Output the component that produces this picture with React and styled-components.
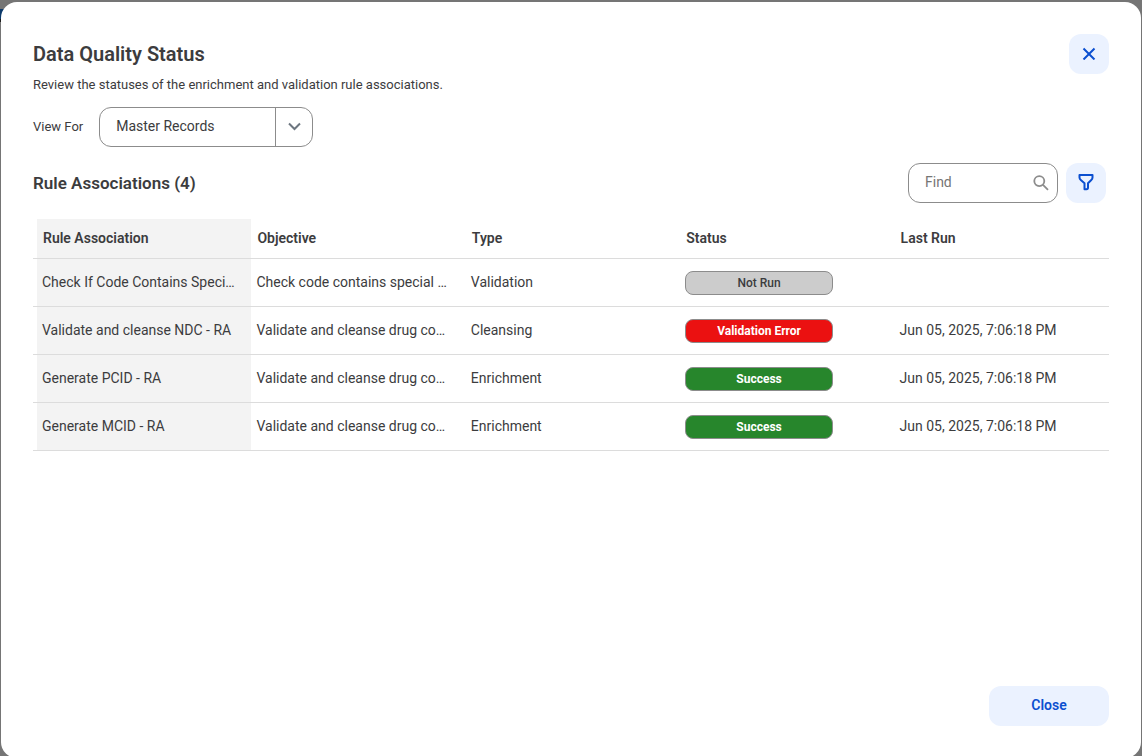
import styled, { createGlobalStyle } from "styled-components";
import { useState } from "react";

const GlobalStyle = createGlobalStyle`
  * {
    box-sizing: border-box;
  }
  body {
    margin: 0;
    font-family: Roboto, "Liberation Sans", sans-serif;
    color: #3c3c3e;
  }
  button, input, select {
    font-family: inherit;
  }
`;

const Backdrop = styled.div`
  height: 100vh;
  overflow: hidden;
  padding: 2px 1px 0;
  background-color: #757575;
  background-image: linear-gradient(#0d3a6b 0 10px, #1c1c1c 10px 13px);
  background-size: 4px 13px;
  background-position: 0 9px;
  background-repeat: no-repeat;
`;

const Modal = styled.div`
  display: flex;
  flex-direction: column;
  min-height: 100vh;
  padding: 32px;
  border-radius: 16px;
  background: #fff;
`;

const Header = styled.header`
  display: flex;
  justify-content: space-between;
  align-items: flex-start;
`;

const Title = styled.h1`
  margin: 8px 0 9px;
  font-size: 20px;
  line-height: 24px;
  font-weight: 600;
`;

const Description = styled.p`
  margin: 0 0 12px;
  font-size: 13px;
  line-height: 20px;
`;

const SoftButton = styled.button`
  display: flex;
  align-items: center;
  justify-content: center;
  flex-shrink: 0;
  width: ${(props) => (props.$wide ? "120px" : "40px")};
  height: 40px;
  padding: 0 0 2px;
  border: none;
  border-radius: 12px;
  background: #ebf2ff;
  color: #0b4fd0;
  font-size: 14px;
  font-weight: 600;
  cursor: pointer;
`;

const ViewRow = styled.div`
  display: flex;
  align-items: center;
  gap: 16px;
  margin-bottom: 16px;
`;

const ViewLabel = styled.label`
  padding-bottom: 2px;
  font-size: 13px;
`;

const SelectBox = styled.div`
  position: relative;
  width: 214px;
`;

const Select = styled.select`
  display: block;
  width: 100%;
  height: 40px;
  padding: 0 40px 2px 16px;
  border: 1px solid #8c8c8c;
  border-radius: 12px;
  background: #fff;
  color: #3c3c3e;
  font-size: 14px;
  appearance: none;
`;

const SelectArrow = styled.span`
  position: absolute;
  top: 0;
  right: 0;
  bottom: 0;
  display: flex;
  align-items: center;
  justify-content: center;
  width: 38px;
  border-left: 1px solid #8c8c8c;
  color: #6d7680;
  pointer-events: none;
`;

const Toolbar = styled.div`
  display: flex;
  align-items: center;
  gap: 8px;
  padding-right: 3px;
  margin-bottom: 16px;
`;

const Subtitle = styled.h2`
  flex: 1;
  margin: 0;
  font-size: 17px;
  font-weight: 600;
`;

const SearchBox = styled.label`
  display: flex;
  align-items: center;
  width: 150px;
  height: 40px;
  padding: 0 8px 0 16px;
  border: 1px solid #8c8c8c;
  border-radius: 12px;
  color: #8c8c8c;
`;

const SearchInput = styled.input`
  flex: 1;
  min-width: 0;
  padding: 0 0 2px;
  border: none;
  outline: none;
  background: transparent;
  color: #3c3c3e;
  font-size: 14px;

  &::placeholder {
    color: #757575;
  }
`;

const Table = styled.table`
  width: 100%;
  table-layout: fixed;
  border-collapse: separate;
  border-spacing: 0;
  font-size: 14px;
`;

const HeadCell = styled.th`
  height: 40px;
  padding: 0 15px 2px 6px;
  border-bottom: 1px solid #dcdcdc;
  text-align: left;
  font-weight: 600;

  &:first-child {
    width: 20.3%;
    padding-left: 10px;
    background: linear-gradient(#f3f3f3, #f3f3f3) 4px 0 no-repeat;
  }
`;

const Cell = styled.td`
  height: 48px;
  padding: ${(props) => (props.$badge ? "0 15px 0 5px" : "0 15px 2px 5px")};
  border-bottom: 1px solid #dcdcdc;
  overflow: hidden;
  text-overflow: ellipsis;
  white-space: nowrap;

  &:first-child {
    padding-left: 9px;
    background: linear-gradient(#f3f3f3, #f3f3f3) 4px 0 no-repeat;
  }
`;

const colors = {
  "Not Run": "#cccccc",
  "Validation Error": "#eb1111",
  Success: "#27862c",
};

const Badge = styled.div`
  width: 76%;
  height: 24px;
  border: 1px solid #8c8c8c;
  border-radius: 8px;
  background: ${(props) => colors[props.$status]};
  color: ${(props) => (props.$status === "Not Run" ? "#3c3c3e" : "#fff")};
  font-size: 12px;
  line-height: 22px;
  font-weight: ${(props) => (props.$status === "Not Run" ? 500 : 700)};
  text-align: center;
`;

const Footer = styled.footer`
  display: flex;
  justify-content: flex-end;
  margin-top: auto;
`;

const rules = [
  { id: 1, name: "Check If Code Contains Speci…", objective: "Check code contains special …", type: "Validation", status: "Not Run", lastRun: "" },
  { id: 2, name: "Validate and cleanse NDC - RA", objective: "Validate and cleanse drug co…", type: "Cleansing", status: "Validation Error", lastRun: "Jun 05, 2025, 7:06:18 PM" },
  { id: 3, name: "Generate PCID - RA", objective: "Validate and cleanse drug co…", type: "Enrichment", status: "Success", lastRun: "Jun 05, 2025, 7:06:18 PM" },
  { id: 4, name: "Generate MCID - RA", objective: "Validate and cleanse drug co…", type: "Enrichment", status: "Success", lastRun: "Jun 05, 2025, 7:06:18 PM" },
];

const App = () => {
  const [search, setSearch] = useState("");

  const visible = rules.filter((rule) =>
    rule.name.toLowerCase().includes(search.toLowerCase())
  );

  return (
    <>
      <GlobalStyle />
      <Backdrop>
        <Modal role="dialog" aria-labelledby="title">
          <Header>
            <div>
              <Title id="title">Data Quality Status</Title>
              <Description>
                Review the statuses of the enrichment and validation rule associations.
              </Description>
            </div>
            <SoftButton type="button" aria-label="Close dialog">
              <svg width="14" height="14" viewBox="0 0 14 14" fill="none" stroke="currentColor" strokeWidth="2">
                <path d="M1.500 2.500l11 11M12.500 2.500l-11 11" />
              </svg>
            </SoftButton>
          </Header>

          <ViewRow>
            <ViewLabel htmlFor="view">View For</ViewLabel>
            <SelectBox>
              <Select id="view">
                <option>Master Records</option>
              </Select>
              <SelectArrow>
                <svg width="14" height="10" viewBox="0 0 14 10" fill="none" stroke="currentColor" strokeWidth="2">
                  <path d="M1 1.500L6.500 7L12 1.500" />
                </svg>
              </SelectArrow>
            </SelectBox>
          </ViewRow>

          <Toolbar>
            <Subtitle>Rule Associations ({rules.length})</Subtitle>
            <SearchBox>
              <SearchInput
                aria-label="Find"
                placeholder="Find"
                value={search}
                onChange={(e) => setSearch(e.target.value)}
              />
              <svg width="16" height="16" viewBox="0 0 16 16" fill="none" stroke="currentColor" strokeWidth="1.800">
                <circle cx="6.300" cy="6.100" r="5" />
                <path d="M10 9.800l5 5" />
              </svg>
            </SearchBox>
            <SoftButton type="button" aria-label="Filter">
              <svg width="16" height="18" viewBox="0 0 16 18" fill="none" stroke="currentColor" strokeWidth="2" strokeLinejoin="round">
                <path d="M2 2h12.500v2.500Q14.500 6 13.300 7L10 10.200V14.500Q10 16.200 8.500 16.200H6.500V10.200L2.800 7Q1.500 6 1.500 4.500V2z" />
              </svg>
            </SoftButton>
          </Toolbar>

          <Table>
            <thead>
              <tr>
                <HeadCell>Rule Association</HeadCell>
                <HeadCell>Objective</HeadCell>
                <HeadCell>Type</HeadCell>
                <HeadCell>Status</HeadCell>
                <HeadCell>Last Run</HeadCell>
              </tr>
            </thead>
            <tbody>
              {visible.map((rule) => (
                <tr key={rule.id}>
                  <Cell>{rule.name}</Cell>
                  <Cell>{rule.objective}</Cell>
                  <Cell>{rule.type}</Cell>
                  <Cell $badge>
                    <Badge $status={rule.status}>{rule.status}</Badge>
                  </Cell>
                  <Cell>{rule.lastRun}</Cell>
                </tr>
              ))}
            </tbody>
          </Table>

          <Footer>
            <SoftButton type="button" $wide>Close</SoftButton>
          </Footer>
        </Modal>
      </Backdrop>
    </>
  );
};

export default App;
